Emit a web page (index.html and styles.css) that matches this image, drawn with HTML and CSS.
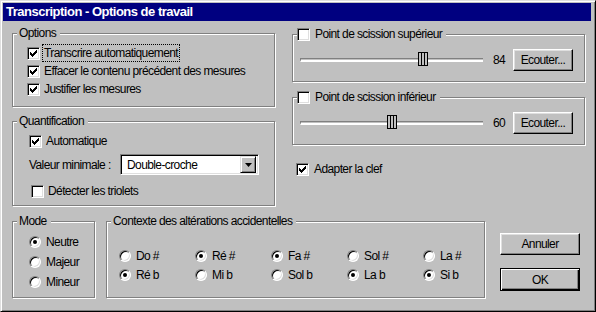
FILE: index.html
```html
<!DOCTYPE html>
<html>
<head>
<meta charset="utf-8">
<link rel="stylesheet" href="styles.css">
</head>
<body>
<div class="window">
  <div class="titlebar">Transcription - Options de travail</div>
  <div class="content">
    <div class="top">
      <div class="col-left">
        <div class="group g-options">
          <div class="legend">Options</div>
          <div class="checks">
            <div class="row"><span class="cb on"></span><span class="lbl focus">Transcrire automatiquement</span></div>
            <div class="row"><span class="cb on"></span><span class="lbl">Effacer le contenu précédent des mesures</span></div>
            <div class="row"><span class="cb on"></span><span class="lbl">Justifier les mesures</span></div>
          </div>
        </div>
        <div class="group g-quant">
          <div class="legend">Quantification</div>
          <div class="row r-auto"><span class="cb on"></span><span class="lbl">Automatique</span></div>
          <div class="row r-combo">
            <span class="combo-label">Valeur minimale :</span>
            <div class="combo"><span class="combo-text">Double-croche</span><span class="combo-btn"><svg width="7" height="4" viewBox="0 0 7 4"><path d="M0 0h7L3.5 4z" fill="#000"/></svg></span></div>
          </div>
          <div class="row r-trio"><span class="cb"></span><span class="lbl">Détecter les triolets</span></div>
        </div>
      </div>
      <div class="col-right">
        <div class="group g-split">
          <div class="legend legend-cb"><span class="cb"></span><span class="lbl">Point de scission supérieur</span></div>
          <div class="slider-row">
            <div class="track"><span class="thumb" style="left:117px"></span></div>
            <span class="value">84</span>
            <button class="btn btn-listen">Ecouter...</button>
          </div>
        </div>
        <div class="group g-split g-split2">
          <div class="legend legend-cb"><span class="cb"></span><span class="lbl">Point de scission inférieur</span></div>
          <div class="slider-row">
            <div class="track"><span class="thumb" style="left:86px"></span></div>
            <span class="value">60</span>
            <button class="btn btn-listen">Ecouter...</button>
          </div>
        </div>
        <div class="row r-adapt"><span class="cb on"></span><span class="lbl">Adapter la clef</span></div>
      </div>
    </div>
    <div class="bottom">
      <div class="group g-mode">
        <div class="legend">Mode</div>
        <div class="radios">
          <div class="row"><span class="rd on"></span><span class="lbl">Neutre</span></div>
          <div class="row"><span class="rd"></span><span class="lbl">Majeur</span></div>
          <div class="row"><span class="rd"></span><span class="lbl">Mineur</span></div>
        </div>
      </div>
      <div class="group g-ctx">
        <div class="legend">Contexte des altérations accidentelles</div>
        <div class="ctx-grid">
          <div class="row"><span class="rd"></span><span class="lbl">Do #</span></div>
          <div class="row"><span class="rd on"></span><span class="lbl">Ré #</span></div>
          <div class="row"><span class="rd on"></span><span class="lbl">Fa #</span></div>
          <div class="row"><span class="rd"></span><span class="lbl">Sol #</span></div>
          <div class="row"><span class="rd"></span><span class="lbl">La #</span></div>
          <div class="row"><span class="rd on"></span><span class="lbl">Ré b</span></div>
          <div class="row"><span class="rd"></span><span class="lbl">Mi b</span></div>
          <div class="row"><span class="rd"></span><span class="lbl">Sol b</span></div>
          <div class="row"><span class="rd on"></span><span class="lbl">La b</span></div>
          <div class="row"><span class="rd on"></span><span class="lbl">Si b</span></div>
        </div>
      </div>
      <div class="buttons">
        <button class="btn btn-cancel">Annuler</button>
        <button class="btn btn-ok">OK</button>
      </div>
    </div>
  </div>
</div>
</body>
</html>
```
FILE: styles.css
```css
* { box-sizing: border-box; }
html, body { margin: 0; padding: 0; }
body {
  width: 596px;
  height: 312px;
  overflow: hidden;
  background: #c0c0c0;
  font-family: "Liberation Sans", Arial, sans-serif;
  font-size: 12px;
  letter-spacing: -0.6px;
  color: #000;
}
.window {
  width: 596px;
  height: 312px;
  background: #c0c0c0;
  border: 1px solid;
  border-color: #dfdfdf #000 #000 #dfdfdf;
  box-shadow: inset 1px 1px 0 #fff, inset -1px -1px 0 #808080;
  padding: 2px 4px 0 2px;
  display: flex;
  flex-direction: column;
}
.titlebar {
  height: 18px;
  background: #000080;
  color: #fff;
  font-weight: bold;
  font-size: 13px;
  letter-spacing: -0.5px;
  line-height: 18px;
  padding-left: 3px;
  white-space: nowrap;
}
.content { padding: 12px 0 0 9px; }
.top { display: flex; align-items: flex-start; }
.col-left { width: 263px; }
.col-right { width: 293px; margin-left: 17px; }

.group {
  border: 1px solid #808080;
  box-shadow: inset 1px 1px 0 #fff, 1px 1px 0 #fff;
}
.legend {
  width: fit-content;
  height: 14px;
  line-height: 14px;
  margin: -8px 0 -6px 4px;
  padding: 0 4px 0 2px;
  background: #c0c0c0;
  white-space: nowrap;
  position: relative;
}
.legend-cb {
  display: flex;
  align-items: center;
  margin-left: 4px;
  padding: 0 4px 0 0;
}
.row { display: flex; align-items: center; white-space: nowrap; }
.lbl { line-height: 14px; }

.cb {
  flex: none;
  width: 13px;
  height: 13px;
  background: #fff;
  border: 1px solid;
  border-color: #808080 #fff #fff #808080;
  box-shadow: inset 1px 1px 0 #000, inset -1px -1px 0 #dfdfdf;
  margin-right: 4px;
}
.cb.on {
  background: #fff url("data:image/svg+xml;utf8,<svg xmlns='http://www.w3.org/2000/svg' width='7' height='7' shape-rendering='crispEdges'><path d='M0 2h1v3H0zM1 3h1v3H1zM2 4h1v3H2zM3 3h1v3H3zM4 2h1v3H4zM5 1h1v3H5zM6 0h1v3H6z' fill='black'/></svg>") no-repeat 2px 2px;
}
.rd {
  flex: none;
  width: 12px;
  height: 12px;
  border-radius: 50%;
  background: #fff;
  border: 1px solid;
  border-color: #808080 #fff #fff #808080;
  box-shadow: inset 1px 1px 0 #000, inset -1px -1px 0 #dfdfdf;
  margin-right: 5px;
  display: flex;
  align-items: center;
  justify-content: center;
}
.rd.on::after {
  content: "";
  width: 4px;
  height: 4px;
  border-radius: 50%;
  background: #000;
}

/* Options */
.g-options { height: 74px; margin-bottom: 14px; }
.checks { padding: 10px 0 0 14px; }
.checks .row { height: 18px; }
.focus { outline: 1px dotted #000; outline-offset: 0; padding: 1px 1px 1px 1px; margin-left: -1px; }

/* Quantification */
.g-quant { height: 85px; }
.r-auto { height: 18px; margin-top: 10px; padding-left: 16px; }
.r-combo { height: 21px; margin-top: 4px; padding-left: 16px; }
.combo-label { width: 91px; }
.combo {
  width: 139px;
  height: 21px;
  background: #fff;
  border: 1px solid;
  border-color: #808080 #fff #fff #808080;
  box-shadow: inset 1px 1px 0 #000, inset -1px -1px 0 #dfdfdf;
  display: flex;
  align-items: center;
  padding: 2px;
}
.combo-text { flex: 1; padding-left: 4px; }
.combo-btn {
  width: 16px;
  height: 17px;
  background: #c0c0c0;
  border: 1px solid;
  border-color: #dfdfdf #000 #000 #dfdfdf;
  box-shadow: inset 1px 1px 0 #fff, inset -1px -1px 0 #808080;
  display: flex;
  align-items: center;
  justify-content: center;
}
.r-trio { height: 18px; margin-top: 7px; padding-left: 18px; }

/* Split groups */
.g-split { height: 48px; margin-top: 1px; }
.g-split2 { margin-top: 15px; }
.legend-cb .cb { margin-right: 5px; }
.slider-row {
  display: flex;
  align-items: center;
  height: 22px;
  margin-top: 14px;
  padding-left: 7px;
}
.track {
  position: relative;
  width: 183px;
  height: 4px;
  border-top: 1px solid #808080;
  border-left: 1px solid #808080;
  border-bottom: 2px solid #fff;
}
.thumb {
  position: absolute;
  top: -7px;
  width: 10px;
  height: 14px;
  border: 1px solid #000;
  background:
    linear-gradient(#000, #000) 2px 0 / 1px 100% no-repeat,
    linear-gradient(#000, #000) 5px 0 / 1px 100% no-repeat,
    #c0c0c0;
}
.value { width: 20px; margin-left: 10px; }
.btn {
  font: inherit;
  letter-spacing: inherit;
  color: #000;
  background: #c0c0c0;
  border: 1px solid;
  border-color: #fff #000 #000 #fff;
  box-shadow: inset -1px -1px 0 #808080, inset 1px 1px 0 #dfdfdf;
  padding: 0;
  display: block;
}
.btn-listen { width: 60px; height: 22px; }
.r-adapt { height: 18px; margin-top: 15px; padding-left: 4px; }
.r-adapt .cb { margin-right: 5px; }

/* Bottom */
.bottom { display: flex; align-items: flex-start; margin-top: 15px; }
.g-mode { width: 83px; height: 77px; }
.radios { padding: 10px 0 0 16px; }
.radios .row { height: 20px; }
.g-ctx { width: 379px; height: 77px; margin-left: 11px; }
.ctx-grid {
  display: grid;
  grid-template-columns: repeat(5, 76px);
  grid-auto-rows: 19px;
  padding: 24px 0 0 12px;
}
.buttons { margin-left: 15px; padding-top: 12px; }
.btn-cancel { width: 80px; height: 22px; }
.btn-ok {
  width: 80px;
  height: 23px;
  margin-top: 13px;
  border: 1px solid #000;
  box-shadow: inset 1px 1px 0 #fff, inset -1px -1px 0 #000, inset -2px -2px 0 #808080;
}
```
